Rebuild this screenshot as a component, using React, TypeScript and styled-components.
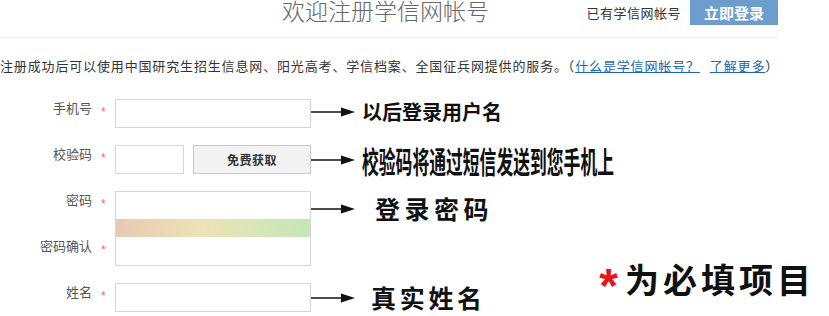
import React from "react";
import styled, { createGlobalStyle } from "styled-components";

const GlobalStyle = createGlobalStyle`
  body {
    margin: 0;
    background: #fff;
    font-family: "Liberation Sans", "Noto Sans CJK SC", sans-serif;
  }
`;

const Page = styled.div`
  width: 829px;
  height: 316px;
  overflow: hidden;
`;

const Header = styled.header`
  width: 778px;
  height: 37px;
  border-bottom: 1px solid #efefef;
  display: flex;
  align-items: flex-start;
`;

const Title = styled.h1`
  margin: 0 0 0 282px;
  font-size: 23px;
  line-height: 24px;
  font-weight: 300;
  color: #666;
  white-space: nowrap;
`;

const Account = styled.div`
  margin-left: auto;
  display: flex;
  align-items: center;
`;

const AccountText = styled.span`
  font-size: 13px;
  letter-spacing: 0.5px;
  color: #333;
  margin-right: 9px;
`;

const LoginButton = styled.button`
  width: 88px;
  height: 25px;
  border: 0;
  padding: 0;
  background: #6c9dcd;
  color: #fff;
  font-family: inherit;
  font-size: 15px;
  font-weight: 700;
`;

const Notice = styled.p`
  margin: 20px 0 0 0;
  font-size: 13px;
  line-height: 18px;
  letter-spacing: 0.85px;
  color: #333;
  white-space: nowrap;
`;

const NoticeLink = styled.a`
  color: #1a66b3;
  text-decoration: underline;
  & + & {
    margin-left: 10px;
  }
`;

const Form = styled.div`
  margin-top: 23px;
  display: flex;
  flex-direction: column;
  gap: 17px;
`;

const Row = styled.div<{ $rows?: string }>`
  display: grid;
  grid-template-columns: 92px 23px 196px 1fr;
  grid-template-rows: ${(p) => p.$rows ?? "auto"};
  align-items: start;
`;

const Label = styled.label<{ $row?: number }>`
  grid-column: 1;
  grid-row: ${(p) => p.$row ?? 1};
  text-align: right;
  font-size: 13px;
  line-height: 18px;
  padding-top: 1px;
  color: #555;
  white-space: nowrap;
`;

const Star = styled.span<{ $row?: number }>`
  grid-column: 2;
  grid-row: ${(p) => p.$row ?? 1};
  padding: 4px 0 0 9px;
  font-size: 12px;
  line-height: 18px;
  color: #e46a6a;
`;

const Field = styled.div<{ $span?: string }>`
  grid-column: 3;
  grid-row: ${(p) => p.$span ?? "1"};
  display: flex;
`;

const TextInput = styled.input<{ $w?: number }>`
  box-sizing: border-box;
  display: block;
  width: ${(p) => p.$w ?? 196}px;
  height: 29px;
  margin: 0;
  padding: 0 6px;
  border: 1px solid #d6d6d6;
  background: #fff;
  outline: none;
`;

const SendButton = styled.button`
  box-sizing: border-box;
  width: 118px;
  height: 29px;
  margin-left: 9px;
  padding: 0;
  border: 1px solid #c8c8c8;
  background: #f3f3f3;
  font-family: inherit;
  font-size: 12px;
  font-weight: 700;
  letter-spacing: 0.5px;
  color: #333;
`;

const PasswordBox = styled.div`
  box-sizing: border-box;
  width: 196px;
  border: 1px solid #d6d6d6;
  display: flex;
  flex-direction: column;
`;

const BareInput = styled.input<{ $h: number }>`
  box-sizing: border-box;
  display: block;
  width: 100%;
  height: ${(p) => p.$h}px;
  margin: 0;
  padding: 0 6px;
  border: 0;
  outline: none;
  background: #fff;
`;

const StrengthBar = styled.div`
  height: 18px;
  background: linear-gradient(90deg, #e8c9b4 0%, #ede3b6 45%, #c4e7b8 100%);
`;

const Note = styled.div<{ $top?: number }>`
  grid-column: 4;
  grid-row: 1;
  height: 29px;
  margin-top: ${(p) => p.$top ?? 0}px;
  display: flex;
  align-items: center;
`;

const Hint = styled.span<{ $size: number; $gap: number; $spacing?: number; $squeeze?: number }>`
  display: inline-block;
  margin-left: ${(p) => p.$gap}px;
  font-family: "Noto Sans CJK SC", sans-serif;
  font-size: ${(p) => p.$size}px;
  font-weight: 700;
  line-height: 1;
  letter-spacing: ${(p) => p.$spacing ?? 0}px;
  color: #111;
  white-space: nowrap;
  transform: scaleX(${(p) => p.$squeeze ?? 1});
  transform-origin: left center;
`;

const Required = styled.div`
  margin: -37px 14px 0 auto;
  font-family: "Noto Sans CJK SC", sans-serif;
  font-size: 34px;
  font-weight: 700;
  line-height: 40px;
  letter-spacing: 4px;
  color: #111;
  white-space: nowrap;
`;

const RedStar = styled.span`
  font-family: "Liberation Sans", sans-serif;
  font-size: 48px;
  line-height: 0;
  color: #e8141c;
  vertical-align: -9px;
  letter-spacing: 7px;
`;

const Arrow = () => (
  <svg width="44" height="10" viewBox="0 0 44 10">
    <line x1="0" y1="5" x2="32" y2="5" stroke="#111" strokeWidth="1.5" />
    <polygon points="30,0.5 44,5 30,9.5" fill="#111" />
  </svg>
);

export default function App() {
  return (
    <Page>
      <GlobalStyle />
      <Header>
        <Title>欢迎注册学信网帐号</Title>
        <Account>
          <AccountText>已有学信网帐号</AccountText>
          <LoginButton>立即登录</LoginButton>
        </Account>
      </Header>

      <Notice>
        注册成功后可以使用中国研究生招生信息网、阳光高考、学信档案、全国征兵网提供的服务。（
        <NoticeLink>什么是学信网帐号？</NoticeLink>
        <NoticeLink>了解更多</NoticeLink>）
      </Notice>

      <Form>
        <Row>
          <Label>手机号</Label>
          <Star>*</Star>
          <Field>
            <TextInput />
          </Field>
          <Note $top={-2}>
            <Arrow />
            <Hint $size={20} $gap={7}>以后登录用户名</Hint>
          </Note>
        </Row>

        <Row>
          <Label>校验码</Label>
          <Star>*</Star>
          <Field>
            <TextInput $w={69} />
            <SendButton>免费获取</SendButton>
          </Field>
          <Note>
            <Arrow />
            <Hint $size={30} $gap={7} $squeeze={0.56}>校验码将通过短信发送到您手机上</Hint>
          </Note>
        </Row>

        <Row $rows="28px 18px 29px">
          <Label $row={1}>密码</Label>
          <Star $row={1}>*</Star>
          <Label $row={3}>密码确认</Label>
          <Star $row={3}>*</Star>
          <Field $span="1 / 4">
            <PasswordBox>
              <BareInput type="password" $h={27} />
              <StrengthBar />
              <BareInput type="password" $h={28} />
            </PasswordBox>
          </Field>
          <Note $top={3}>
            <Arrow />
            <Hint $size={25} $gap={20} $spacing={4.5}>登录密码</Hint>
          </Note>
        </Row>

        <Row>
          <Label>姓名</Label>
          <Star>*</Star>
          <Field>
            <TextInput />
          </Field>
          <Note>
            <Arrow />
            <Hint $size={25} $gap={16} $spacing={3.7}>真实姓名</Hint>
            <Required>
              <RedStar>*</RedStar>为必填项目
            </Required>
          </Note>
        </Row>
      </Form>
    </Page>
  );
}
